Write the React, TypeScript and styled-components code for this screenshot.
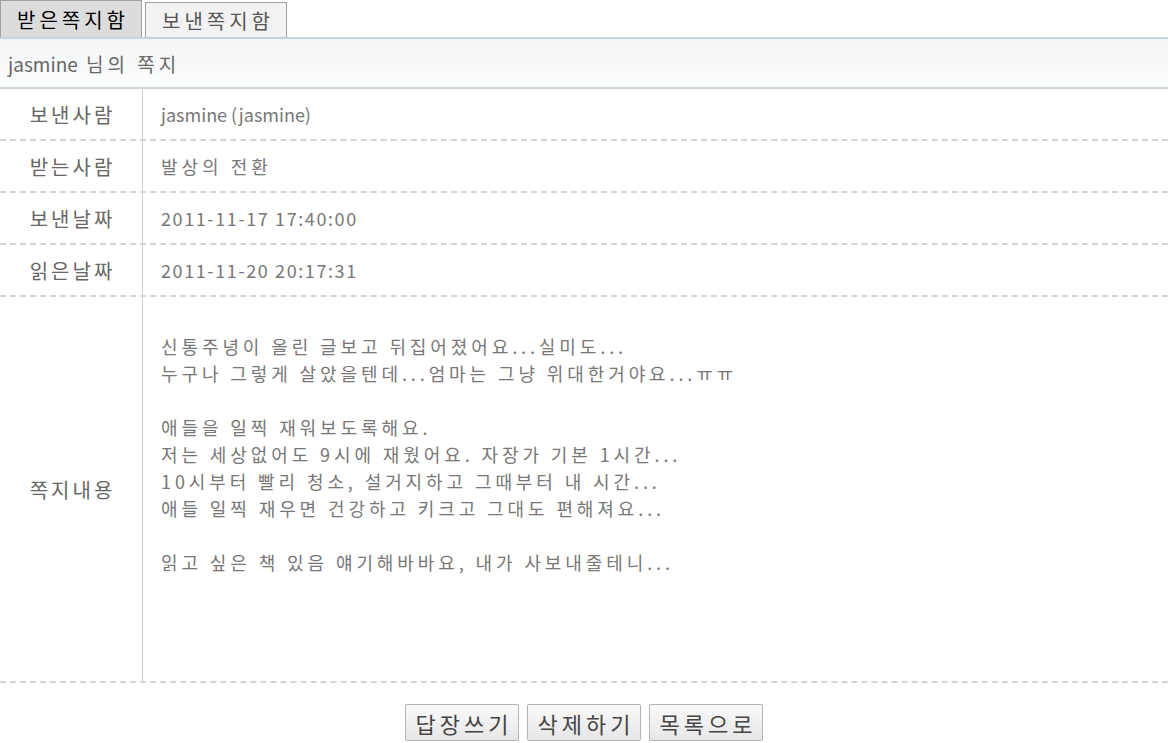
import React from 'react';
import styled, { createGlobalStyle } from 'styled-components';

const GlobalStyle = createGlobalStyle`
  body {
    margin: 0;
    background: #fff;
    font-family: 'Noto Sans CJK KR', 'Noto Sans', sans-serif;
  }
`;

// spacing is per row: hangul in the original font runs wider than latin
const info = [
  { label: '보낸사람', value: 'jasmine (jasmine)', spacing: 0 },
  { label: '받는사람', value: '발상의 전환', spacing: 4 },
  { label: '보낸날짜', value: '2011-11-17 17:40:00', spacing: 1.6 },
  { label: '읽은날짜', value: '2011-11-20 20:17:31', spacing: 1.6 },
];

const message = [
  '신통주녕이 올린 글보고 뒤집어졌어요...실미도...',
  '누구나 그렇게 살았을텐데...엄마는 그냥 위대한거야요...ㅠㅠ',
  '',
  '애들을 일찍 재워보도록해요.',
  '저는 세상없어도 9시에 재웠어요. 자장가 기본 1시간...',
  '10시부터 빨리 청소, 설거지하고 그때부터 내 시간...',
  '애들 일찍 재우면 건강하고 키크고 그대도 편해져요...',
  '',
  '읽고 싶은 책 있음 얘기해바바요, 내가 사보내줄테니...',
];

export default function App(): JSX.Element {
  return (
    <>
      <GlobalStyle />
      <Page>
        <Tabs>
          <Tab $active>받은쪽지함</Tab>
          <Tab>보낸쪽지함</Tab>
        </Tabs>
        <TitleBar>
          <Name>jasmine</Name> 님의 쪽지
        </TitleBar>
        {info.map((row) => (
          <Row key={row.label}>
            <Label>{row.label}</Label>
            <Value $spacing={row.spacing}>{row.value}</Value>
          </Row>
        ))}
        <Row $tall>
          <Label>쪽지내용</Label>
          <Body>
            {message.map((line, i) => (
              <Line key={i}>{line || '\u00a0'}</Line>
            ))}
          </Body>
        </Row>
        <Actions>
          <ActionButton>답장쓰기</ActionButton>
          <ActionButton>삭제하기</ActionButton>
          <ActionButton>목록으로</ActionButton>
        </Actions>
      </Page>
    </>
  );
}

const Page = styled.div`
  width: 1168px;
  display: flex;
  flex-direction: column;
`;

const Tabs = styled.div`
  display: flex;
  align-items: flex-end;
  gap: 3px;
  height: 37px;
`;

const Tab = styled.div<{ $active?: boolean }>`
  box-sizing: border-box;
  width: 142px;
  height: ${(p) => (p.$active ? '37px' : '35px')};
  display: flex;
  align-items: center;
  justify-content: center;
  padding-left: 4px;
  border: 1px solid #a0a0a0;
  border-bottom: none;
  background: ${(p) => (p.$active ? '#dcdcdc' : '#f2f2f2')};
  color: ${(p) => (p.$active ? '#000' : '#555')};
  font-size: 20px;
  letter-spacing: 4px;
`;

const TitleBar = styled.div`
  box-sizing: border-box;
  height: 52px;
  display: flex;
  align-items: center;
  padding-left: 8px;
  border-top: 2px solid #c9d3da;
  border-bottom: 2px solid #c9d3da;
  background: linear-gradient(#f2f4f6, #fcfdfd);
  color: #666;
  font-size: 19px;
  letter-spacing: 4px;
  white-space: pre;
`;

const Name = styled.span`
  letter-spacing: 0;
`;

const Row = styled.div<{ $tall?: boolean }>`
  display: flex;
  height: ${(p) => (p.$tall ? '386px' : '52px')};
  box-sizing: border-box;
  border-bottom: 2px dashed #d4d4d4;
`;

const Label = styled.div`
  width: 143px;
  flex: none;
  box-sizing: border-box;
  border-right: 1px solid #cfcfcf;
  display: flex;
  align-items: center;
  justify-content: center;
  padding-left: 3px;
  color: #666;
  font-size: 20px;
  letter-spacing: 3px;
`;

const Value = styled.div<{ $spacing: number }>`
  display: flex;
  align-items: center;
  padding-left: 18px;
  color: #777;
  font-size: 18px;
  letter-spacing: ${(p) => p.$spacing}px;
`;

const Body = styled.div`
  padding: 36px 0 0 18px;
  color: #777;
  font-size: 18px;
  line-height: 27px;
  letter-spacing: 3.9px;
`;

const Line = styled.div`
  white-space: pre;
`;

const Actions = styled.div`
  display: flex;
  justify-content: center;
  gap: 8px;
  padding-top: 21px;
`;

const ActionButton = styled.button`
  width: 114px;
  height: 37px;
  border: 1px solid #b4b4b4;
  border-radius: 2px;
  background: linear-gradient(#fafafa, #e6e6e6);
  color: #444;
  font-family: 'Noto Sans CJK KR', sans-serif;
  font-size: 22px;
  letter-spacing: 4px;
  padding: 0 0 0 4px;
  cursor: pointer;
`;
